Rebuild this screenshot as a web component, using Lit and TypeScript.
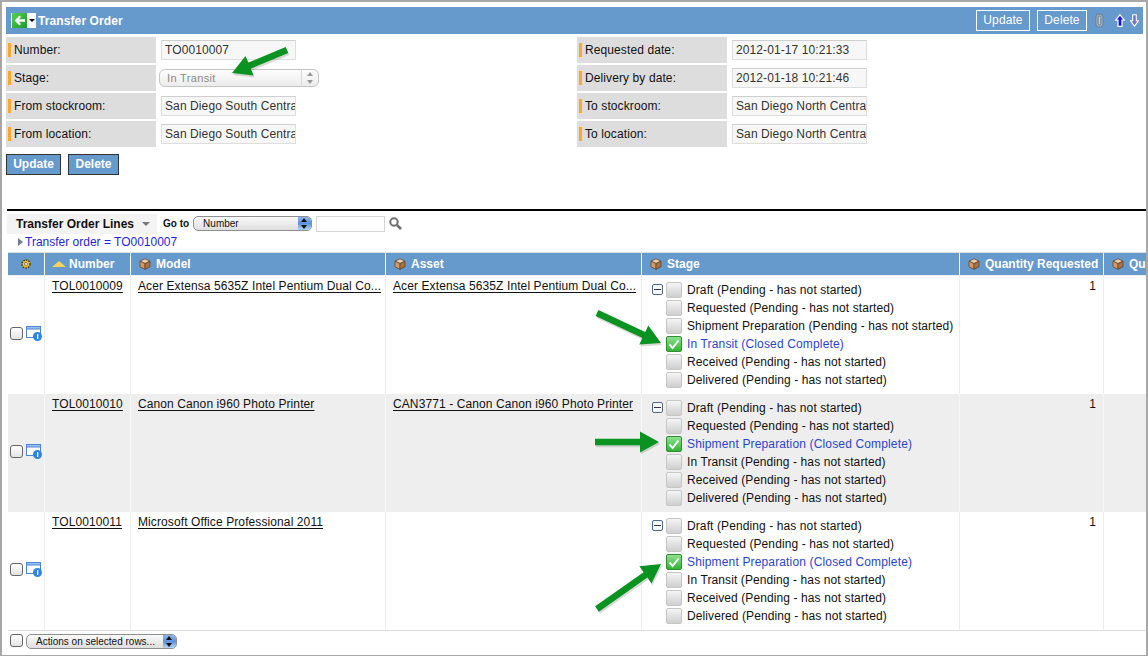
import { LitElement, html, css, svg } from "lit";
import { customElement } from "lit/decorators.js";

const STAGES = ["Draft", "Requested", "Shipment Preparation", "In Transit", "Received", "Delivered"];

const ROWS = [
  { num: "TOL0010009", model: "Acer Extensa 5635Z Intel Pentium Dual Co...", asset: "Acer Extensa 5635Z Intel Pentium Dual Co...", done: 3 },
  { num: "TOL0010010", model: "Canon Canon i960 Photo Printer", asset: "CAN3771 - Canon Canon i960 Photo Printer", done: 2 },
  { num: "TOL0010011", model: "Microsoft Office Professional 2011", asset: "", done: 2 },
];

const cube = html`<svg class="cube" width="12" height="12" viewBox="0 0 12 12">
  <path d="M6 .8 11 3.200 6 5.600 1 3.200Z" fill="#eccba6" stroke="#5c4028" stroke-width=".7"/>
  <path d="M1 3.200 6 5.600V11.300L1 8.800Z" fill="#d39a66" stroke="#5c4028" stroke-width=".7"/>
  <path d="M11 3.200 6 5.600V11.300L11 8.800Z" fill="#a9713f" stroke="#5c4028" stroke-width=".7"/>
</svg>`;

// straight green callout arrow from tail to tip
const arrow = (x1: number, y1: number, x2: number, y2: number) => {
  const a = Math.atan2(y2 - y1, x2 - x1);
  const c = Math.cos(a), s = Math.sin(a);
  const bx = x2 - c * 19, by = y2 - s * 19;
  const w = 3.3, h = 10.5;
  const p = (px: number, py: number) => `${px.toFixed(1)},${py.toFixed(1)}`;
  const pts = [
    p(x1 - s * w, y1 + c * w), p(bx - s * w, by + c * w), p(bx - s * h, by + c * h),
    p(x2, y2),
    p(bx + s * h, by - c * h), p(bx + s * w, by - c * w), p(x1 + s * w, y1 - c * w),
  ].join(" ");
  return svg`<polygon points=${pts} fill="#808080" opacity=".3" transform="translate(1 2)"/>
    <polygon points=${pts} fill="#0a9320"/>`;
};

@customElement("app-root")
export class AppRoot extends LitElement {
  static styles = css`
    :host {
      display: block;
      position: relative;
      width: 1148px;
      height: 656px;
      box-sizing: border-box;
      overflow: hidden;
      background: #fff;
      border-top: 2px solid #a8a8a8;
      border-left: 2px solid #a8a8a8;
      border-right: 2px solid #a8a8a8;
      border-bottom: 1px solid #a8a8a8;
      font: 12px "Liberation Sans", Arial, sans-serif;
      letter-spacing: .1px;
      color: #111;
    }
    .titlebar {
      display: flex;
      align-items: center;
      height: 27px;
      margin: 5px 3px 0 4px;
      padding: 0 4px 0 5px;
      background: #6699cc;
      color: #fff;
    }
    .nav {
      display: flex;
      align-items: center;
      box-sizing: border-box;
      width: 25px;
      height: 15px;
      padding-left: 1px;
      background: #fff;
      margin-right: 2px;
    }
    .caret {
      width: 0;
      height: 0;
      margin-left: 2px;
      border: 3px solid transparent;
      border-top: 3px solid #000;
      border-bottom: 0;
    }
    .title {
      font-weight: bold;
      flex: 1;
    }
    .ghost {
      box-sizing: border-box;
      height: 21px;
      line-height: 19px;
      text-align: center;
      border: 1px solid #fff;
      color: #fff;
    }
    .ghost.first { width: 54px; }
    .ghost.second { width: 50px; margin-left: 7px; }
    .clip { margin-left: 8px; }
    .up { margin-left: 11px; }
    .down { margin-left: 5px; }
    .form {
      display: grid;
      grid-template-columns: 571px 310px;
      margin: 3px 0 0 4px;
    }
    .col { display: flex; flex-direction: column; gap: 2px; }
    .frow { display: flex; align-items: center; height: 26px; }
    .flabel {
      box-sizing: border-box;
      display: flex;
      align-items: center;
      width: 150px;
      height: 26px;
      padding-left: 2px;
      background: #dddddd;
    }
    .flabel::before {
      content: "";
      width: 3px;
      height: 14px;
      margin-right: 3px;
      background: #ffa726;
    }
    .finput {
      box-sizing: border-box;
      width: 135px;
      height: 20px;
      margin-left: 5px;
      padding-left: 3px;
      line-height: 19px;
      border: 1px solid #dedede;
      border-top-color: #cfcfcf;
      background: #f7f7f7;
      color: #333;
      white-space: nowrap;
      overflow: hidden;
    }
    .fselect {
      position: relative;
      box-sizing: border-box;
      width: 160px;
      height: 18px;
      margin-left: 3px;
      padding-left: 7px;
      line-height: 17px;
      border: 1px solid #c4c4c4;
      border-radius: 6px;
      background: linear-gradient(#fdfdfd, #ececec);
      color: #8a8a8a;
      font-size: 11px;
      letter-spacing: .35px;
    }
    .fselect .sp {
      position: absolute;
      right: 0;
      top: 0;
      bottom: 0;
      width: 16px;
      border-left: 1px solid #d8d8d8;
    }
    .sp::before, .sp::after {
      content: "";
      position: absolute;
      left: 5px;
      width: 0;
      border: 3px solid transparent;
    }
    .sp::before { top: 2px; border-top: 0; border-bottom: 4px solid #999; }
    .sp::after { bottom: 2px; border-bottom: 0; border-top: 4px solid #999; }
    .btns { display: flex; gap: 7px; margin: 7px 0 0 4px; }
    .btn {
      box-sizing: border-box;
      height: 21px;
      line-height: 18px;
      text-align: center;
      background: #6699cc;
      border: 1px solid #333;
      color: #fff;
      font-weight: bold;
      letter-spacing: 0;
    }
    .rule { height: 2px; margin: 34px 0 0 5px; background: #000; }
    .toolbar {
      display: flex;
      align-items: center;
      height: 21px;
      margin: 2px 0 0 5px;
    }
    .lname {
      display: flex;
      align-items: center;
      box-sizing: border-box;
      width: 150px;
      height: 20px;
      padding-left: 9px;
      background: #f3f3f3;
      font-weight: bold;
      letter-spacing: 0;
    }
    .lname i {
      width: 0;
      height: 0;
      margin-left: 8px;
      border: 4px solid transparent;
      border-top: 4px solid #777;
      border-bottom: 0;
    }
    .goto { margin: 0 4px 0 6px; font-size: 10px; font-weight: bold; letter-spacing: 0; }
    .mac {
      position: relative;
      box-sizing: border-box;
      height: 15px;
      line-height: 14px;
      padding-left: 9px;
      border: 1px solid #8f8f8f;
      border-radius: 5px;
      background: linear-gradient(#fafafa, #dedede);
      font-size: 10px;
      letter-spacing: 0;
      overflow: hidden;
    }
    .mac .sp {
      position: absolute;
      right: 0;
      top: 0;
      bottom: 0;
      width: 13px;
      background: linear-gradient(#8fb6e8, #5c94dc 50%, #b5d4f6);
    }
    .mac .sp::before { left: 3px; top: 1px; border-bottom-color: #111; border-bottom-width: 4px; }
    .mac .sp::after { left: 3px; bottom: 1px; border-top-color: #111; border-top-width: 4px; }
    .search {
      box-sizing: border-box;
      width: 69px;
      height: 16px;
      margin: 0 5px 0 4px;
      border: 1px solid #d4d4d4;
    }
    .filter {
      display: flex;
      align-items: center;
      height: 15px;
      margin-left: 16px;
      color: #1f1fe0;
      letter-spacing: 0;
    }
    .filter::before {
      content: "";
      margin-right: 2px;
      border: 4px solid transparent;
      border-left: 5px solid #6e7f90;
      border-right: 0;
    }
    .grid-head, .grow {
      display: grid;
      margin-left: 6px;
    }
    .grid-head {
      grid-template-columns: 36px 85px 254px 255px 317px 143px 60px;
      column-gap: 1px;
      height: 22px;
      margin-top: 3px;
      border-top: 1px solid #ddd;
      border-bottom: 1px solid #eee;
    }
    .hc {
      display: flex;
      align-items: center;
      padding-left: 8px;
      background: #6699cc;
      color: #fff;
      font-weight: bold;
      letter-spacing: 0;
      white-space: nowrap;
      overflow: hidden;
    }
    .hc.gear { padding-left: 12px; }
    .hc.sort { padding-left: 7px; }
    .cube { margin-right: 5px; flex: none; }
    .grow {
      height: 118px;
      background: #eeeeee;
      grid-template-columns: 37px 86px 255px 256px 318px 144px 60px;
    }
    .grow.plain { background: #fff; }
    .grow > div { box-sizing: border-box; border-right: 1px solid #ececec; }
    .grow.alt > div { border-right-color: #f6f6f6; }
    .sel { display: flex; align-items: center; gap: 3px; padding: 0 0 4px 2px; }
    .box {
      box-sizing: border-box;
      width: 13px;
      height: 13px;
      border: 1px solid #666;
      border-radius: 3px;
      background: linear-gradient(#fff, #e3e3e3);
    }
    .info { flex: none; }
    .cell { padding: 1px 0 0 7px; line-height: 18px; white-space: nowrap; overflow: hidden; }
    .cell u { text-underline-offset: 2px; }
    .qty { text-align: right; padding: 2px 7px 0 0; line-height: 16px; }
    .stage { display: flex; padding: 5px 0 0 10px; }
    .minus {
      box-sizing: border-box;
      position: relative;
      width: 11px;
      height: 11px;
      margin: 3px 3px 0 0;
      border: 1px solid #4a6a88;
      border-radius: 2px;
      background: #f7fafc;
      flex: none;
    }
    .minus::after {
      content: "";
      position: absolute;
      left: 1px;
      right: 1px;
      top: 4px;
      height: 1px;
      background: #334;
    }
    .sline { display: flex; align-items: center; height: 18px; white-space: nowrap; }
    .chk {
      box-sizing: border-box;
      width: 16px;
      height: 16px;
      margin-right: 5px;
      border: 1px solid #c6c6c6;
      border-radius: 2px;
      background: linear-gradient(#f5f5f5, #cfcfcf);
      flex: none;
    }
    .chk.on {
      display: flex;
      align-items: center;
      justify-content: center;
      border: 1px solid #2f8f2f;
      background: linear-gradient(#8fe08f, #2fb535);
    }
    .sline.done { color: #2a45cf; letter-spacing: .15px; }
    .foot {
      display: flex;
      align-items: flex-start;
      gap: 3px;
      height: 24px;
      margin-left: 6px;
      padding: 3px 0 0 2px;
      border-top: 1px solid #ddd;
    }
    .arrows { position: absolute; left: -2px; top: -2px; pointer-events: none; }
  `;

  private stageCell(done: number) {
    return html`<div class="stage">
      <span class="minus"></span>
      <div>
        ${STAGES.map((s, i) =>
          i === done
            ? html`<div class="sline done">
                <span class="chk on"><svg width="12" height="11" viewBox="0 0 12 11"><path d="M1.500 5.500 4.600 9 10.500 1.500" fill="none" stroke="#fff" stroke-width="2"/></svg></span>${s} (Closed Complete)
              </div>`
            : html`<div class="sline"><span class="chk"></span>${s} (Pending - has not started)</div>`
        )}
      </div>
    </div>`;
  }

  render() {
    const left = [["Number:", "TO0010007"], ["Stage:", ""], ["From stockroom:", "San Diego South Central"], ["From location:", "San Diego South Central"]];
    const right = [["Requested date:", "2012-01-17 10:21:33"], ["Delivery by date:", "2012-01-18 10:21:46"], ["To stockroom:", "San Diego North Central"], ["To location:", "San Diego North Central"]];
    return html`
      <div class="titlebar">
        <span class="nav">
          <svg width="15" height="15" viewBox="0 0 15 15">
            <defs><linearGradient id="navg" x1="0" y1="0" x2="1" y2="1"><stop offset="0" stop-color="#5ccf4e"/><stop offset="1" stop-color="#179a2c"/></linearGradient></defs>
            <rect width="15" height="15" fill="url(#navg)"/>
            <path d="M2.500 7.500 7.500 2.500 9 4 6.800 6.200H13V8.800H6.800L9 11 7.500 12.500Z" fill="#fff"/>
          </svg>
          <span class="caret"></span>
        </span>
        <span class="title">Transfer Order</span>
        <span class="ghost first">Update</span>
        <span class="ghost second">Delete</span>
        <svg class="clip" width="9" height="15" viewBox="0 0 9 15">
          <rect x=".8" y=".8" width="7.400" height="13.400" rx="3.700" fill="#9fb0c2" stroke="#6f8298" stroke-width="1.200"/>
          <rect x="3.200" y="3" width="2.600" height="9" rx="1.300" fill="#c3cfdb" stroke="#5f7890" stroke-width=".9"/>
        </svg>
        <svg class="up" width="10" height="13" viewBox="0 0 10 13">
          <path d="M5 .8 9.400 6.200H7V12.300H3V6.200H.6Z" fill="#1616d8" stroke="#fff" stroke-width="1.200"/>
        </svg>
        <svg class="down" width="9" height="13" viewBox="0 0 9 13">
          <path d="M4.500 12.200 8.500 6.800H6.300V.7H2.700V6.800H.5Z" fill="#7070c4" stroke="#fff" stroke-width="1.100"/>
        </svg>
      </div>

      <div class="form">
        <div class="col">
          ${left.map(([l, v]) => html`<div class="frow">
            <span class="flabel">${l}</span>
            ${l === "Stage:"
              ? html`<span class="fselect">In Transit<span class="sp"></span></span>`
              : html`<span class="finput">${v}</span>`}
          </div>`)}
        </div>
        <div class="col">
          ${right.map(([l, v]) => html`<div class="frow">
            <span class="flabel">${l}</span><span class="finput">${v}</span>
          </div>`)}
        </div>
      </div>
      <div class="btns">
        <span class="btn" style="width:55px">Update</span>
        <span class="btn" style="width:51px">Delete</span>
      </div>

      <div class="rule"></div>
      <div class="toolbar">
        <span class="lname">Transfer Order Lines<i></i></span>
        <span class="goto">Go to</span>
        <span class="mac" style="width:119px">Number<span class="sp"></span></span>
        <span class="search"></span>
        <svg width="13" height="13" viewBox="0 0 13 13" style="margin-left:-1px">
          <circle cx="5" cy="5" r="3.700" fill="none" stroke="#6f6f6f" stroke-width="2"/>
          <path d="M7.800 7.800 12 12" stroke="#6f6f6f" stroke-width="2.600"/>
        </svg>
      </div>
      <div class="filter">Transfer order = TO0010007</div>

      <div class="grid-head">
        <div class="hc gear">
          <svg width="12" height="12" viewBox="0 0 12 12">
            <circle cx="6" cy="6" r="4" fill="#f0c040" stroke="#4a3a10" stroke-width="1.500" stroke-dasharray="1.600 1"/>
            <circle cx="6" cy="6" r="1.500" fill="#fff" stroke="#4a3a10" stroke-width=".6"/>
          </svg>
        </div>
        <div class="hc sort">
          <svg width="14" height="6" viewBox="0 0 14 6" style="margin-right:3px"><path d="M7 0 14 6H0Z" fill="#f4d35e"/></svg>Number
        </div>
        <div class="hc">${cube}Model</div>
        <div class="hc">${cube}Asset</div>
        <div class="hc">${cube}Stage</div>
        <div class="hc">${cube}Quantity Requested</div>
        <div class="hc">${cube}Quantity</div>
      </div>

      ${ROWS.map((r, i) => html`<div class="grow ${i === 1 ? "alt" : "plain"}">
        <div class="sel">
          <span class="box"></span>
          <svg class="info" width="16" height="15" viewBox="0 0 16 15">
            <rect x=".5" y=".5" width="14" height="11" fill="#fff" stroke="#4a86d8"/>
            <rect x=".5" y=".5" width="14" height="2.500" fill="#9cc0ee" stroke="#4a86d8"/>
            <circle cx="11.500" cy="10.500" r="4.500" fill="#2f86e0"/>
            <rect x="11" y="8" width="1.300" height="5" fill="#fff"/>
          </svg>
        </div>
        <div class="cell"><u>${r.num}</u></div>
        <div class="cell"><u>${r.model}</u></div>
        <div class="cell"><u>${r.asset}</u></div>
        ${this.stageCell(r.done)}
        <div class="qty">1</div>
        <div></div>
      </div>`)}

      <div class="foot">
        <span class="box"></span>
        <span class="mac" style="width:151px">Actions on selected rows...<span class="sp"></span></span>
      </div>

      <svg class="arrows" width="1148" height="656">
        ${arrow(287, 50, 232, 73)}
        ${arrow(597, 313, 661, 343)}
        ${arrow(595, 442, 659, 442)}
        ${arrow(597, 609, 661, 564)}
      </svg>
    `;
  }
}
